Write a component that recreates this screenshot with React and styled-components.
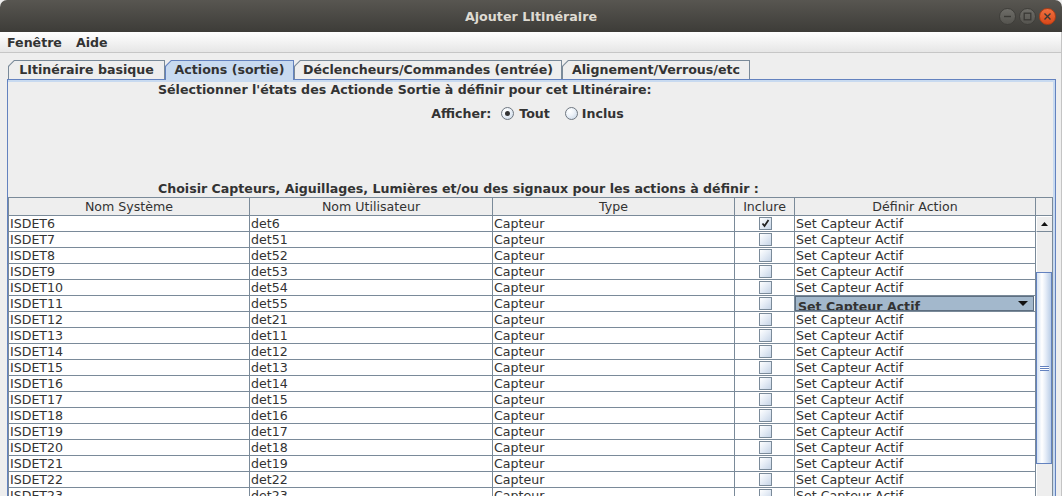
import React from 'react';
import styled, { createGlobalStyle } from 'styled-components';

const Global = createGlobalStyle`
  html, body { margin: 0; padding: 0; background: #eeeeee; }
  body { font-family: "DejaVu Sans", "Liberation Sans", sans-serif; font-size: 12.6px; color: #333333; }
  * { box-sizing: border-box; }
`;

const GRID = '#7a8a99';
const BLUE = '#6382bf';
const LIGHTBLUE = '#c8daf0';
const COLS = '241px 243px 242px 60px 241px';

const Window = styled.div`
  width: 1062px;
  height: 496px;
  overflow: hidden;
  display: flex;
  flex-direction: column;
  background: #eeeeee;
`;

const TitleBar = styled.div`
  flex: none;
  height: 32px;
  border-radius: 7px 7px 0 0;
  background: linear-gradient(#585651, #3d3c38);
  display: grid;
  grid-template-columns: 1fr auto 1fr;
  align-items: center;
`;

const Title = styled.div`
  grid-column: 2;
  color: #dfdbd2;
  font-weight: bold;
  font-size: 12.7px;
`;

const WinButtons = styled.div`
  grid-column: 3;
  justify-self: end;
  display: flex;
  gap: 3px;
  padding-right: 6px;
`;

const WinButton = styled.div`
  width: 17px;
  height: 17px;
  border-radius: 50%;
  display: flex;
  align-items: center;
  justify-content: center;
  background: ${p => (p.$close ? 'linear-gradient(#f0703f, #d9481a)' : 'linear-gradient(#6e6d68, #55544f)')};
  border: 1px solid ${p => (p.$close ? '#b23d14' : '#3f3e3a')};
`;

const Body = styled.div`
  flex: 1;
  display: flex;
  flex-direction: column;
  border-right: 1px solid #c4c4c4;
  min-height: 0;
`;

const MenuBar = styled.div`
  flex: none;
  height: 21px;
  display: flex;
  align-items: center;
  background: linear-gradient(#ffffff, #e6e6e6);
  border-bottom: 1px solid #c6c6c6;
`;

const MenuItem = styled.div`
  padding: 0 7px;
  font-weight: bold;
  color: #333333;
`;

const TabStrip = styled.div`
  flex: none;
  display: flex;
  margin-top: 7px;
  padding-left: 8px;
  height: 19px;
  align-items: flex-start;
`;

const Tab = styled.div`
  width: ${p => p.$w}px;
  height: ${p => (p.$active ? 20 : 19)}px;
  padding: 1px 1px 0 1px;
  background: ${p => (p.$active ? BLUE : GRID)};
  clip-path: polygon(0 6px, 6px 0, 100% 0, 100% 100%, 0 100%);
  position: relative;
  z-index: ${p => (p.$active ? 2 : 1)};
`;

const TabFace = styled.div`
  height: 100%;
  background: ${p => (p.$active ? LIGHTBLUE : '#eeeeee')};
  clip-path: polygon(0 5.5px, 5.5px 0, 100% 0, 100% 100%, 0 100%);
  font-weight: bold;
  line-height: 18px;
  text-align: center;
  color: #333333;
  white-space: nowrap;
`;

const Panel = styled.div`
  flex: 1;
  min-height: 0;
  overflow: hidden;
  margin: 0 5px 0 7px;
  border: 1px solid ${BLUE};
  border-bottom: none;
  box-shadow: inset 0 2px 0 ${LIGHTBLUE}, inset -2px 0 0 ${LIGHTBLUE};
  padding: 2px 2px 0 0;
  display: flex;
  flex-direction: column;
  & > * { flex: none; }
`;

const Label = styled.div`
  height: 16px;
  line-height: 16px;
  padding-left: 150px;
  margin-top: ${p => p.$mt || 0}px;
  font-weight: bold;
  white-space: nowrap;
`;

const FilterRow = styled.div`
  margin-top: 5px;
  height: 20px;
  display: flex;
  align-items: center;
  justify-content: center;
  font-weight: bold;
  padding-right: 6px;
`;

const FilterText = styled.span`
  margin-left: ${p => p.$ml || 0}px;
`;

const Radio = styled.span`
  width: 13px;
  height: 13px;
  border-radius: 50%;
  margin-left: ${p => p.$ml}px;
  border: 1px solid #6f7780;
  background: radial-gradient(circle at 35% 30%, #ffffff 0%, #eef3f9 40%, #c4d3e4 100%);
  display: flex;
  align-items: center;
  justify-content: center;
  &::after {
    content: '';
    display: ${p => (p.$checked ? 'block' : 'none')};
    width: 5px;
    height: 5px;
    border-radius: 50%;
    background: #333333;
  }
`;

const ScrollPane = styled.div`
  width: 1045px;
  border-left: 1px solid ${GRID};
  border-top: 1px solid ${GRID};
  display: flex;
  flex-direction: column;
  background: #ffffff;
`;

const HeaderRow = styled.div`
  display: grid;
  grid-template-columns: ${COLS} 17px;
  background: #eeeeee;
`;

const HeaderCell = styled.div`
  height: 18px;
  line-height: 17px;
  border-right: 1px solid ${GRID};
  border-bottom: 1px solid ${GRID};
  text-align: center;
  color: #333333;
  white-space: nowrap;
  overflow: hidden;
`;

const BodyArea = styled.div`
  display: flex;
`;

const Rows = styled.div`
  width: 1027px;
  display: flex;
  flex-direction: column;
`;

const Row = styled.div`
  display: grid;
  grid-template-columns: ${COLS};
  height: 16px;
  flex: none;
`;

const Cell = styled.div`
  border-right: 1px solid ${GRID};
  border-bottom: 1px solid ${GRID};
  padding-left: 1px;
  line-height: 15px;
  white-space: nowrap;
  overflow: hidden;
  color: #333333;
  display: flex;
  align-items: ${p => (p.$center ? 'center' : 'stretch')};
  justify-content: ${p => (p.$center ? 'center' : 'flex-start')};
`;

const CheckBox = styled.span`
  width: 13px;
  height: 13px;
  border: 1px solid ${GRID};
  background: linear-gradient(135deg, #ffffff 0%, #e6edf6 45%, #c6d4e6 100%);
  display: flex;
  align-items: center;
  justify-content: center;
`;

const ComboCell = styled.div`
  border-right: 1px solid ${GRID};
  border-bottom: 1px solid ${GRID};
  display: flex;
  overflow: hidden;
`;

const Combo = styled.div`
  flex: 1;
  display: flex;
  align-items: stretch;
  background: #a3b8cc;
  border: 1px solid #5d6e80;
  margin-right: 1px;
  overflow: hidden;
`;

const ComboText = styled.div`
  flex: 1;
  padding: 2px 0 0 2px;
  font-weight: bold;
  line-height: 15px;
  color: #333333;
  white-space: nowrap;
  overflow: hidden;
`;

const ComboArrow = styled.div`
  width: 20px;
  display: flex;
  align-items: center;
  justify-content: center;
`;

const VScroll = styled.div`
  width: 17px;
  border-right: 1px solid ${GRID};
  display: flex;
  flex-direction: column;
  background: #eeeeee;
`;

const UpButton = styled.div`
  height: 16px;
  flex: none;
  border-top: 1px solid #ffffff;
  border-left: 1px solid #ffffff;
  border-bottom: 1px solid ${GRID};
  display: flex;
  align-items: center;
  justify-content: center;
  background: #eeeeee;
`;

const Track = styled.div`
  height: ${p => p.$h}px;
  flex: none;
  border-left: 1px solid #ffffff;
`;

const Thumb = styled.div`
  height: 192px;
  flex: none;
  border: 1px solid ${BLUE};
  background: linear-gradient(90deg, #d6e3f3 0%, #ffffff 35%, #e7eef8 60%, #b9cde6 100%);
  display: flex;
  align-items: center;
  justify-content: center;
`;

const Grip = styled.div`
  width: 9px;
  height: 5px;
  background: repeating-linear-gradient(${BLUE} 0 1px, #ffffff 1px 2px);
`;

const rows = [
  ['ISDET6', 'det6', true],
  ['ISDET7', 'det51'],
  ['ISDET8', 'det52'],
  ['ISDET9', 'det53'],
  ['ISDET10', 'det54'],
  ['ISDET11', 'det55', false, true],
  ['ISDET12', 'det21'],
  ['ISDET13', 'det11'],
  ['ISDET14', 'det12'],
  ['ISDET15', 'det13'],
  ['ISDET16', 'det14'],
  ['ISDET17', 'det15'],
  ['ISDET18', 'det16'],
  ['ISDET19', 'det17'],
  ['ISDET20', 'det18'],
  ['ISDET21', 'det19'],
  ['ISDET22', 'det22'],
  ['ISDET23', 'det23'],
];

const tabs = [
  ['LItinéraire basique', 157],
  ['Actions (sortie)', 129, true],
  ['Déclencheurs/Commandes (entrée)', 268],
  ['Alignement/Verrous/etc', 188],
];

export default function App() {
  return (
    <>
      <Global />
      <Window>
        <TitleBar>
          <Title>Ajouter LItinéraire</Title>
          <WinButtons>
            <WinButton>
              <svg width="9" height="9" viewBox="0 0 9 9"><path d="M1 4.5h7" stroke="#3a3935" strokeWidth="1.4" /></svg>
            </WinButton>
            <WinButton>
              <svg width="9" height="9" viewBox="0 0 9 9"><rect x="1.2" y="1.2" width="6.6" height="6.6" fill="none" stroke="#3a3935" strokeWidth="1.3" /></svg>
            </WinButton>
            <WinButton $close>
              <svg width="9" height="9" viewBox="0 0 9 9"><path d="M1.5 1.5l6 6M7.5 1.5l-6 6" stroke="#3a3935" strokeWidth="1.4" /></svg>
            </WinButton>
          </WinButtons>
        </TitleBar>
        <Body>
          <MenuBar>
            <MenuItem>Fenêtre</MenuItem>
            <MenuItem>Aide</MenuItem>
          </MenuBar>
          <TabStrip>
            {tabs.map(([t, w, a]) => (
              <Tab key={t} $w={w} $active={a}>
                <TabFace $active={a}>{t}</TabFace>
              </Tab>
            ))}
          </TabStrip>
          <Panel>
            <Label>Sélectionner l'états des Actionde Sortie à définir pour cet LItinéraire:</Label>
            <FilterRow>
              <FilterText>Afficher:</FilterText>
              <Radio $ml={10} $checked />
              <FilterText $ml={5}>Tout</FilterText>
              <Radio $ml={15} />
              <FilterText $ml={4}>Inclus</FilterText>
            </FilterRow>
            <Label $mt={58}>Choisir Capteurs, Aiguillages, Lumières et/ou des signaux pour les actions à définir :</Label>
            <ScrollPane>
              <HeaderRow>
                <HeaderCell>Nom Système</HeaderCell>
                <HeaderCell>Nom Utilisateur</HeaderCell>
                <HeaderCell>Type</HeaderCell>
                <HeaderCell>Inclure</HeaderCell>
                <HeaderCell>Définir Action</HeaderCell>
                <HeaderCell />
              </HeaderRow>
              <BodyArea>
                <Rows>
                  {rows.map(([sys, user, checked, combo]) => (
                    <Row key={sys}>
                      <Cell>{sys}</Cell>
                      <Cell>{user}</Cell>
                      <Cell>Capteur</Cell>
                      <Cell $center>
                        <CheckBox>
                          {checked && (
                            <svg width="9" height="9" viewBox="0 0 9 9">
                              <path d="M1.5 4.5 L3.5 7 L7.5 1" fill="none" stroke="#222" strokeWidth="1.8" />
                            </svg>
                          )}
                        </CheckBox>
                      </Cell>
                      {combo ? (
                        <ComboCell>
                          <Combo>
                            <ComboText>Set Capteur Actif</ComboText>
                            <ComboArrow>
                              <svg width="10" height="5" viewBox="0 0 10 5"><path d="M0 0h10L5 5z" fill="#111" /></svg>
                            </ComboArrow>
                          </Combo>
                        </ComboCell>
                      ) : (
                        <Cell>Set Capteur Actif</Cell>
                      )}
                    </Row>
                  ))}
                </Rows>
                <VScroll>
                  <UpButton>
                    <svg width="7" height="4" viewBox="0 0 7 4"><path d="M0 4h7L3.5 0z" fill="#111" /></svg>
                  </UpButton>
                  <Track $h={40} />
                  <Thumb><Grip /></Thumb>
                  <Track $h={200} />
                </VScroll>
              </BodyArea>
            </ScrollPane>
          </Panel>
        </Body>
      </Window>
    </>
  );
}
